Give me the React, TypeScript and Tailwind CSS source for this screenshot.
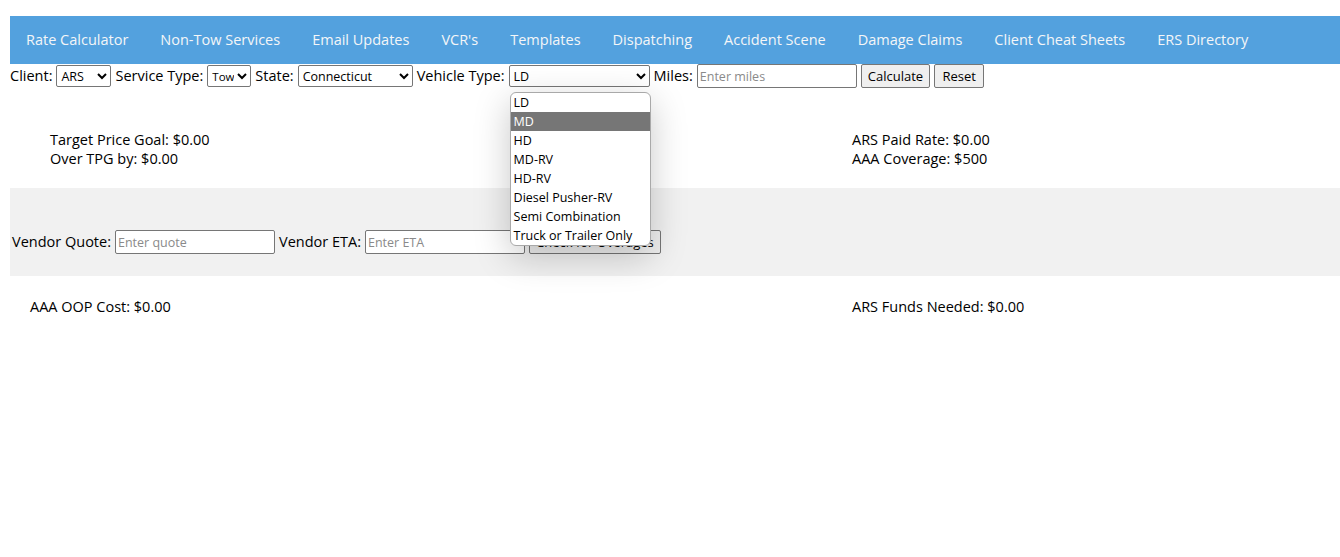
import React from 'react';

const navItems = [
  'Rate Calculator',
  'Non-Tow Services',
  'Email Updates',
  "VCR's",
  'Templates',
  'Dispatching',
  'Accident Scene',
  'Damage Claims',
  'Client Cheat Sheets',
  'ERS Directory',
];

const vehicleTypes = [
  'LD',
  'MD',
  'HD',
  'MD-RV',
  'HD-RV',
  'Diesel Pusher-RV',
  'Semi Combination',
  'Truck or Trailer Only',
];

const selectCls =
  'h-[22px] border border-[#767676] rounded-[2px] bg-white leading-none text-black pl-0 outline-none';
const inputCls =
  'h-[24px] w-[160px] border border-[#767676] rounded-[2px] bg-white px-[2px] text-[12.5px] placeholder:text-[#8a8a8a] outline-none';
const btnCls =
  'h-[24px] border border-[#767676] rounded-[2px] bg-[#efefef] px-[6px] text-[13px] text-black leading-none';

const App: React.FC = () => {
  return (
    <div
      className="min-h-[557px] bg-white pl-[10px] pt-[16px] text-[14.5px] text-black"
      style={{ fontFamily: '"Open Sans", sans-serif' }}
    >
      {/* top nav */}
      <nav className="flex h-[48px] items-center bg-[#53a1de]">
        {navItems.map(item => (
          <a key={item} className="whitespace-nowrap px-4 text-[14.5px] text-[#f4f6f8]">
            {item}
          </a>
        ))}
      </nav>

      {/* calculator inputs */}
      <div className="flex h-[24px] items-center gap-1 whitespace-nowrap">
        <label>Client:</label>
        <select className={`${selectCls} w-[55px] text-[12.5px]`} defaultValue="ARS">
          <option>ARS</option>
        </select>
        <label>Service Type:</label>
        <select className={`${selectCls} w-[44px] text-[11.5px]`} defaultValue="Tow">
          <option>Tow</option>
        </select>
        <label>State:</label>
        <select className={`${selectCls} w-[115px] text-[12.5px]`} defaultValue="Connecticut">
          <option>Connecticut</option>
        </select>
        <label>Vehicle Type:</label>
        <div className="relative">
          <select className={`${selectCls} w-[141px] text-[12.5px]`} defaultValue="LD">
            {vehicleTypes.map(v => (
              <option key={v}>{v}</option>
            ))}
          </select>
          {/* open dropdown list */}
          <div className="absolute left-[1px] top-[27px] z-10 w-[141px] overflow-hidden rounded-[6px] border border-[#a9a9a9] bg-white shadow-[0_10px_36px_rgba(0,0,0,0.22)]">
            {vehicleTypes.map(v => (
              <div
                key={v}
                className={`h-[19px] pl-[3px] text-[12.5px] leading-[19px] ${v === 'MD' ? 'bg-[#767676] text-white' : 'text-black'}`}
              >
                {v}
              </div>
            ))}
          </div>
        </div>
        <label>Miles:</label>
        <input className={inputCls} placeholder="Enter miles" />
        <button className={btnCls}>Calculate</button>
        <button className={`${btnCls} w-[50px]`}>Reset</button>
      </div>

      {/* results */}
      <div className="mt-[42px] flex leading-[19px]">
        <div className="w-[842px] pl-[40px]">
          <p>Target Price Goal: $0.00</p>
          <p>Over TPG by: $0.00</p>
        </div>
        <div>
          <p>ARS Paid Rate: $0.00</p>
          <p>AAA Coverage: $500</p>
        </div>
      </div>

      {/* vendor section */}
      <div className="mt-[20px] h-[88px] bg-[#f1f1f1] pl-[2px] pt-[42px]">
        <div className="flex items-center gap-1 whitespace-nowrap">
          <label>Vendor Quote:</label>
          <input className={inputCls} placeholder="Enter quote" />
          <label>Vendor ETA:</label>
          <input className={inputCls} placeholder="Enter ETA" />
          <button className={btnCls}>Check for Overages</button>
        </div>
      </div>

      <div className="mt-[21px] flex leading-[19px]">
        <div className="w-[842px] pl-[20px]">
          <p>AAA OOP Cost: $0.00</p>
        </div>
        <div>
          <p>ARS Funds Needed: $0.00</p>
        </div>
      </div>
    </div>
  );
};

export default App;
